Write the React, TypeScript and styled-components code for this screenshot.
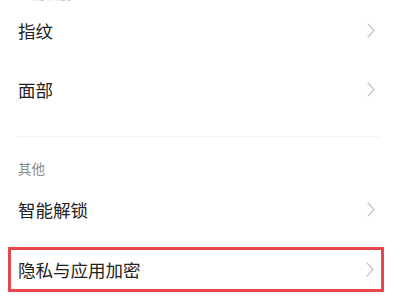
import React from "react";
import styled, { createGlobalStyle } from "styled-components";

const GlobalStyle = createGlobalStyle`
  html, body {
    margin: 0;
    padding: 0;
    background: #ffffff;
  }
  body {
    font-family: "Noto Sans CJK SC", "Noto Sans", sans-serif;
    overflow: hidden;
  }
`;

// Settings list page
const Page = styled.div`
  width: 400px;
  height: 300px;
  overflow: hidden;
  background: #ffffff;
  display: flex;
  flex-direction: column;
`;

// Section title (small gray text above a group)
const SectionLabel = styled.div`
  padding: 22px 18px 3px;
  font-size: 13.5px;
  line-height: 18px;
  color: #8a8a8a;
  flex-shrink: 0;
`;

// the group title scrolled mostly out of view at the top
const ScrolledLabel = styled(SectionLabel)`
  padding: 0 18px;
  margin-top: -16px;
  height: 17px;
  color: #c4c4c4;
`;

const Row = styled.div<{ $highlight?: boolean }>`
  display: flex;
  align-items: center;
  justify-content: space-between;
  flex-shrink: 0;
  height: ${(p) => (p.$highlight ? "45px" : "59px")};
  box-sizing: border-box;
  padding: ${(p) => (p.$highlight ? "0 7px 0 7px" : "0 25px 0 18px")};
  margin: ${(p) => (p.$highlight ? "8px 16px 0 8px" : "0")};
  border: ${(p) => (p.$highlight ? "3px solid #e8474d" : "none")};
`;

const Title = styled.span`
  font-size: 17.5px;
  color: #222222;
`;

const Divider = styled.div`
  height: 1px;
  margin: 17px 20px 0 18px;
  background: #f3f3f3;
  flex-shrink: 0;
`;

const Chevron = () => (
  <svg width="8" height="15" viewBox="0 0 8 15">
    <polyline
      points="1,1 7,7.5 1,14"
      fill="none"
      stroke="#c8c8c8"
      strokeWidth="1.4"
      strokeLinecap="round"
      strokeLinejoin="round"
    />
  </svg>
);

interface ItemProps {
  title: string;
  highlight?: boolean;
}

const Item = ({ title, highlight }: ItemProps) => (
  <Row $highlight={highlight}>
    <Title>{title}</Title>
    <Chevron />
  </Row>
);

const App = () => {
  return (
    <>
      <GlobalStyle />
      <Page>
        <ScrolledLabel>生物识别</ScrolledLabel>
        <Item title="指纹" />
        <Item title="面部" />
        <Divider />
        <SectionLabel>其他</SectionLabel>
        <Item title="智能解锁" />
        <Item title="隐私与应用加密" highlight />
      </Page>
    </>
  );
};

export default App;
